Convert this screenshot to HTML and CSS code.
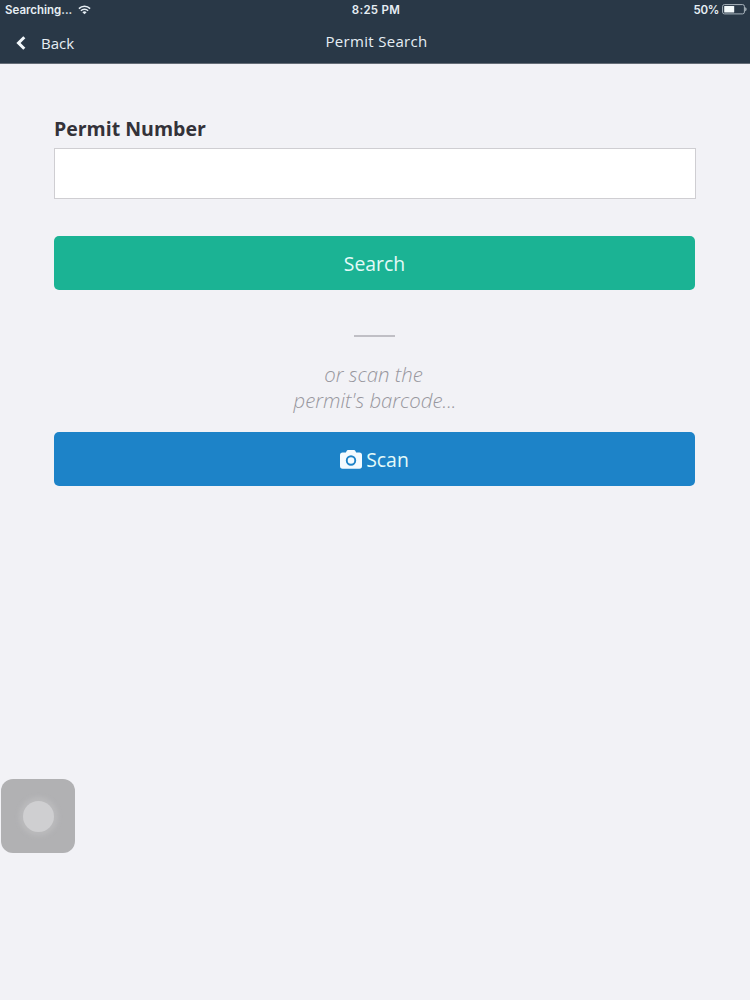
FILE: index.html
```html
<!DOCTYPE html>
<html lang="en">
<head>
<meta charset="utf-8">
<title>Permit Search</title>
<link rel="stylesheet" href="styles.css">
</head>
<body>
<header class="header">
  <div class="status">
    <div class="status-left"><span class="carrier">Searching...</span>
      <svg class="wifi" width="13" height="10" viewBox="0 0 13 10" fill="none" stroke="#e6eef4" stroke-width="1.5"><path d="M.9 3.6a8 8 0 0 1 11.2 0M2.9 5.7a5.1 5.1 0 0 1 7.2 0"/><path d="M6.5 9.3 4.4 7.2a3 3 0 0 1 4.2 0z" fill="#e6eef4" stroke="none"/></svg>
    </div>
    <span class="clock">8:25 PM</span>
    <div class="status-right"><span class="percent">50%</span>
      <svg width="25" height="11" viewBox="0 0 25 11"><rect x=".6" y=".6" width="21.8" height="9.3" rx="1.8" fill="none" stroke="#a9b4bd"/><rect x="2.2" y="2.1" width="10" height="6.3" rx=".5" fill="#f4fafc"/><path d="M23.3 3.3c1.600.4 1.600 3.500 0 3.900z" fill="#c3ccd3"/></svg>
    </div>
  </div>
  <nav class="nav">
    <a class="back"><svg width="10" height="14" viewBox="0 0 10 14" fill="none" stroke="#f2f8fb" stroke-width="3"><path d="M8.300 1.200 2.500 7l5.800 5.800"/></svg><span>Back</span></a>
    <h1 class="title">Permit Search</h1>
  </nav>
</header>
<main class="content">
  <label class="label" for="permit">Permit Number</label>
  <input class="field" id="permit" type="text">
  <button class="button search">Search</button>
  <hr class="divider">
  <p class="hint"><span class="hint-first">or scan the</span><br><span>permit's barcode...</span></p>
  <button class="button scan"><svg width="22" height="19" viewBox="0 0 22 19"><path fill="#f4fbff" fill-rule="evenodd" d="M2.600 2.600h3.300L6.600 1Q7 0 8.100 0h5.800q1.100 0 1.500 1l.7 1.600h3.300Q22 2.600 22 5.200v10.900q0 2.600-2.600 2.600H2.600Q0 18.700 0 16.100V5.200q0-2.600 2.600-2.600zM11 5.300a5.200 5.200 0 1 0 0 10.400 5.200 5.200 0 0 0 0-10.400zm0 1.900a3.300 3.300 0 1 1 0 6.600 3.300 3.300 0 0 1 0-6.600z"/></svg><span>Scan</span></button>
</main>
<div class="assistive"><span class="assistive-dot"></span></div>
</body>
</html>
```
FILE: styles.css
```css
* { box-sizing: border-box; }

body {
  margin: 0;
  height: 1000px;
  overflow: hidden;
  background: #f2f2f6;
  font-family: "Open Sans", sans-serif;
}

.header {
  height: 64px;
  background: #293847;
  border-bottom: 1px solid #656d77;
  color: #e6eef4;
}

.status {
  display: grid;
  grid-template-columns: 1fr auto 1fr;
  height: 19px;
  align-items: center;
  padding: 0 3px 0 5px;
  font: 600 11.5px/18px Inter, sans-serif;
}

.status-left,
.status-right {
  display: flex;
  align-items: center;
}

.status-left { gap: 6px; }
.status-right { justify-content: flex-end; gap: 3px; }
.percent { letter-spacing: -0.3px; }
.clock { letter-spacing: 0.3px; }

.nav {
  display: grid;
  grid-template-columns: 1fr auto 1fr;
  height: 44px;
  padding: 0 13px 0 16px;
}

.back {
  display: flex;
  align-items: center;
  gap: 15px;
  height: 48px;
  font-size: 15px;
}

.title {
  margin: 0;
  font-size: 15px;
  font-weight: 400;
  letter-spacing: 0.3px;
  line-height: 44px;
}

.content {
  display: flex;
  flex-direction: column;
  padding: 51px 54px 0;
}

.label {
  height: 33px;
  color: #343239;
  font-size: 19.5px;
  font-weight: 700;
  line-height: 28px;
}

.field {
  width: 100%;
  height: 51px;
  border: 1px solid #cfced2;
  background: #fff;
  border-radius: 0;
  outline: 0;
}

.button {
  display: flex;
  align-items: center;
  justify-content: center;
  gap: 4px;
  width: 641px;
  height: 54px;
  padding: 1px 0 0;
  border: 0;
  border-radius: 5px;
  color: #e4faf8;
  font: 19.4px/27px "Open Sans", sans-serif;
}

.search {
  margin-top: 37px;
  background: #1bb394;
}

.scan {
  background: #1d83c8;
}

.divider {
  width: 41px;
  height: 2px;
  margin: 45px 0 0 300px;
  border: 0;
  background: #c0bfc5;
}

.hint {
  height: 95px;
  margin: 0;
  padding: 25px 0 0;
  color: #98979e;
  font-size: 20.4px;
  font-style: italic;
  font-weight: 300;
  line-height: 25.5px;
  text-align: center;
}

.hint-first {
  padding-right: 3px;
}

.assistive {
  position: absolute;
  left: 1px;
  top: 779px;
  display: flex;
  align-items: center;
  justify-content: center;
  width: 74px;
  height: 74px;
  border-radius: 12px;
  background: #b1b1b3;
}

.assistive-dot {
  width: 31px;
  height: 31px;
  border-radius: 50%;
  background: #cfcfd1;
  box-shadow: 0 0 4px 4px #bababc;
}
```
